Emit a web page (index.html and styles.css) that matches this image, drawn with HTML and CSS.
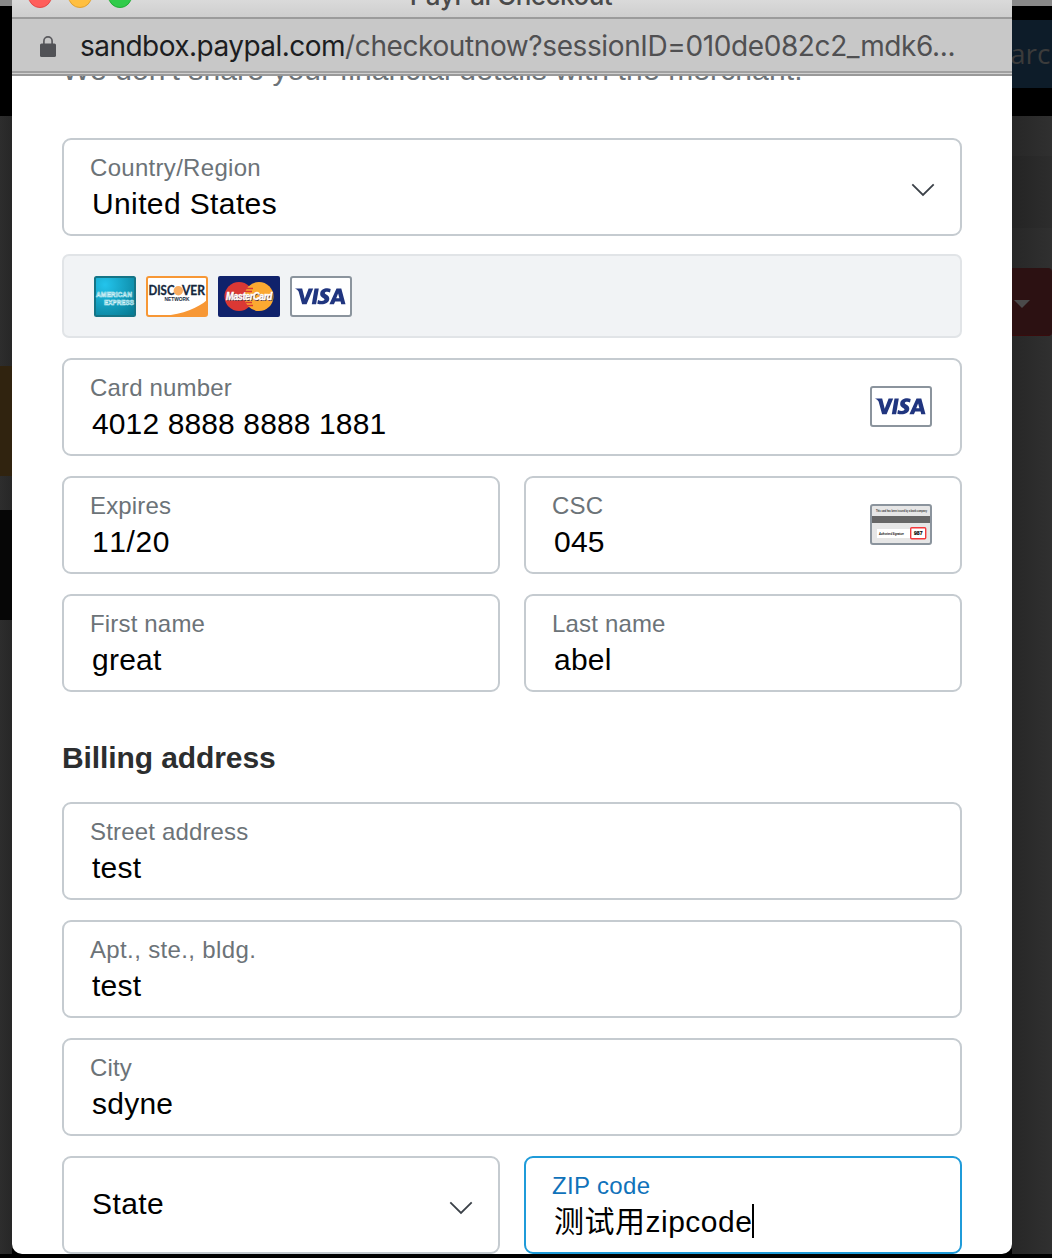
FILE: index.html
```html
<!DOCTYPE html>
<html lang="en">
<head>
<meta charset="utf-8">
<title>PayPal Checkout</title>
<link rel="stylesheet" href="styles.css">
</head>
<body>
<svg class="defs" width="0" height="0" aria-hidden="true">
  <symbol id="chevron" viewBox="0 0 24 14"><path d="M1.3 1.3 12 12 22.7 1.3" fill="none" stroke="#3b4148" stroke-width="1.8"/></symbol>
  <symbol id="visa" viewBox="0 0 62 41">
    <rect x="1" y="1" width="60" height="39" rx="2" fill="#fff" stroke="#8b949d" stroke-width="2"/>
    <path d="M5 12.5h7.2l2.5 10.3L18.6 12.5h4.6l-6.6 15.8h-4.5L8.6 15.4Q7.5 13.5 5 12.5z" fill="#20357f"/>
    <path d="M24.5 12.5h4.3l-2.7 15.8h-4.3z" fill="#20357f"/>
    <path d="M40.7 12.9 40 16.4c-2-.9-5-.9-5.2.6-.2 1.7 4.900 1.900 4.500 6-.5 5-6.900 6.200-12 4.700l.7-3.700c2.600 1.300 6.200 1.300 6.500-.4.200-1.700-4.800-2-4.300-6.200.6-4.700 6.200-5.900 10.500-4.500z" fill="#20357f"/>
    <path fill-rule="evenodd" d="M46.500 12.500h4.800l4.200 15.800h-4.300l-.6-2.700h-5.400l-1.300 2.700h-4.500zm1.600 5-1.900 4.800h3.200z" fill="#20357f"/>
  </symbol>
</svg>
<div class="screen">
  <div class="backdrop left">
    <div class="strip browser"></div><div class="strip nav"></div><div class="strip gap"></div>
    <div class="strip gold"></div><div class="strip small-gap"></div><div class="strip dark"></div>
  </div>
  <div class="window">
    <header class="titlebar">
      <div class="lights"><i class="red"></i><i class="yellow"></i><i class="green"></i></div>
      <div class="title">PayPal Checkout</div>
    </header>
    <div class="address">
      <svg class="lock" width="16" height="21" viewBox="0 0 16 21"><path d="M3.900 9V5a4.100 4.100 0 0 1 8.200 0v4" fill="none" stroke="#5a5a5e" stroke-width="1.700"/><rect y="7.500" width="16" height="13.500" rx="1.600" fill="#515256"/></svg>
      <div class="url"><span>sandbox.paypal.com</span>/checkoutnow?sessionID=010de082c2_mdk6...</div>
    </div>
    <main class="page">
      <div class="notice"><p>We don't share your financial details with the merchant.</p></div>
      <form class="form">
        <div class="field country"><div><label>Country/Region</label><div class="value">United States</div></div><svg class="chevron"><use href="#chevron"/></svg></div>
        <div class="cards">
          <svg width="42" height="41" viewBox="0 0 42 41">
            <defs><radialGradient id="amex" cx=".25" cy=".2" r="1"><stop stop-color="#23c4ec"/><stop offset="1" stop-color="#087d96"/></radialGradient></defs>
            <rect x="1" y="1" width="40" height="39" rx="1.500" fill="url(#amex)" stroke="#157486" stroke-width="2"/>
            <g class="amex-text"><text x="2" y="21" textLength="36" lengthAdjust="spacingAndGlyphs">AMERICAN</text><text x="10" y="28.500" textLength="30" lengthAdjust="spacingAndGlyphs">EXPRESS</text></g>
          </svg>
          <svg width="62" height="41" viewBox="0 0 62 41">
            <rect x="1" y="1" width="60" height="39" rx="2" fill="#fff"/><path d="M61 24v16H18C37 38 52 32 61 24z" fill="#f79735"/>
            <rect x="1" y="1" width="60" height="39" rx="2" fill="none" stroke="#f79735" stroke-width="2"/>
            <text class="discover" x="2.500" y="19.300" textLength="26" lengthAdjust="spacingAndGlyphs">DISC</text><circle cx="32.300" cy="14.800" r="4.700" fill="#f9ad62"/><text class="discover" x="36" y="19.300" textLength="23" lengthAdjust="spacingAndGlyphs">VER</text>
            <text class="network" x="18.500" y="25" textLength="25" lengthAdjust="spacingAndGlyphs">NETWORK</text>
          </svg>
          <svg width="62" height="41" viewBox="0 0 62 41">
            <rect width="62" height="41" rx="2" fill="#10226b"/><circle cx="21" cy="20.500" r="14.500" fill="#da3834"/><circle cx="41" cy="20.500" r="14.500" fill="#fba931"/>
            <path d="M28.500 12.500H35M27 15.500h7M28 26.500h6M29 29.500h6" stroke="#da3834" stroke-width="1.500"/>
            <text class="mc shadow" x="8.700" y="25" textLength="46" lengthAdjust="spacingAndGlyphs">MasterCard</text><text class="mc" x="8" y="24.300" textLength="46" lengthAdjust="spacingAndGlyphs">MasterCard</text>
          </svg>
          <svg width="62" height="41"><use href="#visa"/></svg>
        </div>
        <div class="field number"><div><label>Card number</label><div class="value">4012 8888 8888 1881</div></div><svg width="62" height="41"><use href="#visa"/></svg></div>
        <div class="row">
          <div class="field expires"><div><label>Expires</label><div class="value">11/20</div></div></div>
          <div class="field"><div><label>CSC</label><div class="value">045</div></div>
            <svg width="62" height="41" viewBox="0 0 62 41"><rect x="1" y="1" width="60" height="39" rx="2" fill="#e6e6e6" stroke="#8b949d" stroke-width="2"/><rect x="2" y="12" width="58" height="7" fill="#666"/><text class="micro" x="6" y="7.500" textLength="51" lengthAdjust="spacingAndGlyphs">This card has been issued by a bank company</text><rect x="7" y="25" width="33" height="9" fill="#fff"/><text class="signature" x="9" y="31" textLength="25" lengthAdjust="spacingAndGlyphs">Authorized Signature</text><rect x="40.700" y="23.700" width="15" height="11" rx="1" fill="#fff" stroke="#f3373b" stroke-width="1.400"/><text class="code" x="44" y="31.200" textLength="8.500" lengthAdjust="spacingAndGlyphs">987</text></svg>
          </div>
        </div>
        <div class="row">
          <div class="field"><div><label>First name</label><div class="value">great</div></div></div>
          <div class="field"><div><label>Last name</label><div class="value">abel</div></div></div>
        </div>
        <h2>Billing address</h2>
        <div class="field"><div><label>Street address</label><div class="value">test</div></div></div>
        <div class="field apartment"><div><label>Apt., ste., bldg.</label><div class="value">test</div></div></div>
        <div class="field"><div><label>City</label><div class="value">sdyne</div></div></div>
        <div class="row">
          <div class="field state"><div class="value">State</div><svg class="chevron"><use href="#chevron"/></svg></div>
          <div class="field focused"><div><label>ZIP code</label><div class="value">测试用zipcode<i class="caret"></i></div></div></div>
        </div>
      </form>
    </main>
  </div>
  <div class="backdrop right">
    <div class="strip browser"></div><div class="strip nav-top"></div><div class="strip search">arch</div><div class="strip nav-bottom"></div>
    <div class="strip light"></div><div class="strip mid"></div><div class="strip light"></div><div class="strip red-button"><svg width="16" height="8"><path d="M0 0h16L8 8z" fill="#4a4a4a"/></svg></div>
  </div>
</div>
</body>
</html>
```

FILE: styles.css
```css
* { box-sizing: border-box; }
body { margin: 0; background: #000; font-family: "Liberation Sans", "Noto Sans CJK SC", sans-serif; height: 1258px; overflow: hidden; }
.defs { position: absolute; }
.screen { display: grid; grid-template-columns: 12px 1000px 40px; height: 1254px; }
.backdrop { background: #2b2b2b; overflow: hidden; }
.left { background: linear-gradient(90deg, #2d2d2d, #272727); }
.right { background: linear-gradient(90deg, #272727, #303030); }
.strip.browser { height: 6px; background: #898989; }
.strip.nav { height: 110px; background: #000; }
.strip.gap { height: 250px; }
.strip.gold { height: 110px; background: #30230f; }
.strip.small-gap { height: 34px; }
.strip.dark { height: 110px; background: #060606; }
.strip.nav-top { height: 14px; background: #000; }
.strip.search { height: 68px; background: #0d1c29; color: #3b3b3b; font: 28px/67px "Open Sans", sans-serif; text-indent: -2px; white-space: nowrap; }
.strip.nav-bottom { height: 28px; background: #000; }
.strip.light { height: 40px; }
.strip.mid { height: 72px; background: #00000010; }
.strip.red-button { height: 68px; background: #2c1112; border-bottom: 1px solid #3a0b0c; border-radius: 0 4px 4px 0; padding: 32px 2px; display: flex; }
.window { height: 1254px; background: #fff; border-radius: 0 0 10px 10px; overflow: hidden; }
.titlebar { height: 19px; background: linear-gradient(#dadada, #cecece); border-bottom: 2px solid #9b9b9b; display: grid; grid-template-columns: 120px 1fr 120px; grid-template-rows: 17px; align-items: end; overflow: hidden; }
.lights { display: flex; gap: 16px; padding: 0 0 9px 16px; }
.lights i { flex: none; width: 24px; height: 24px; border-radius: 50%; border: 1px solid; }
.lights .red { background: #ff5e5b; border-color: #e24a48; }
.lights .yellow { background: #ffbf40; border-color: #dfa133; }
.lights .green { background: #30cb4a; border-color: #22ad36; }
.title { font: 500 26px/32px Inter, sans-serif; color: #4a4a4a; text-align: center; padding: 0 2px 5px 0; letter-spacing: -.5px; }
.address { height: 57px; background: #c8c8c8; border-bottom: 2px solid #999; box-shadow: inset 0 -1px #d0d0d0, inset 0 -3px #a0a0a0; display: flex; padding: 0 0 0 28px; }
.lock { margin: 17px 24px 0 0; flex: none; }
.url { font: 28px/55px Inter, sans-serif; color: #505052; white-space: nowrap; letter-spacing: -.39px; }
.url span { color: #1c1d21; letter-spacing: -.53px; }
.page { padding: 0 50px; }
.notice { height: 62px; overflow: hidden; display: flex; align-items: flex-start; }
.notice p { margin: -23px 0 0; font-size: 30px; line-height: 34px; color: #6c7378; white-space: nowrap; letter-spacing: .12px; }
.form { display: flex; flex-direction: column; gap: 20px; }
.field { height: 98px; border: 2px solid #c5cbd0; border-radius: 9px; padding: 13px 28px 0 26px; display: flex; justify-content: space-between; background: #fff; }
.field svg { flex: none; margin-top: 13px; }
.field label { display: block; font-size: 24px; line-height: 30px; color: #6c7378; letter-spacing: .17px; }
.value { font-size: 30px; line-height: 36px; padding: 3px 0 0 2px; letter-spacing: .25px; color: #000; white-space: nowrap; font-kerning: none; }
.number .value { letter-spacing: .12px; }
.expires .value { letter-spacing: .6px; }
.apartment label { letter-spacing: .36px; }
.chevron { width: 24px; height: 14px; }
.country { margin-bottom: -2px; padding-right: 25px; }
.country label { letter-spacing: .3px; }
.country .value { letter-spacing: .38px; }
.field.country .chevron { margin-top: 30px; }
.cards { height: 84px; border: 2px solid #e1e4e7; border-radius: 7px; background: #f1f3f5; display: flex; gap: 10px; padding: 20px 30px; }
.row { display: grid; grid-template-columns: 438px 438px; gap: 24px; }
.amex-text { font: bold 7.5px "Liberation Sans", sans-serif; fill: #22a5c2; stroke: #d8f3f8; stroke-width: .6px; }
.discover { font: bold 12.5px Lato, sans-serif; fill: #16283d; stroke: #16283d; stroke-width: .3px; }
.network { font: bold 5px "Liberation Sans", sans-serif; fill: #16283d; }
.mc { font: italic bold 10px "Liberation Sans", sans-serif; fill: #fff; stroke: #fff; stroke-width: .4px; letter-spacing: -.5px; }
.mc.shadow { fill: #4b2b38; stroke: none; }
.micro { font: bold 3px "Liberation Sans", sans-serif; fill: #333; }
.signature { font: italic bold 4px "Liberation Sans", sans-serif; fill: #000; }
.code { font: bold 6px "Liberation Sans", sans-serif; fill: #000; stroke: #000; stroke-width: .2px; }
h2 { margin: 29px 0 7px; height: 34px; font-size: 30px; line-height: 34px; font-weight: bold; color: #2c2e2f; letter-spacing: -.1px; }
.state { padding-right: 25px; }
.state .value { padding-top: 15px; letter-spacing: .4px; }
.field.state .chevron { margin-top: 30px; }
.focused { border-color: #1f9bd9; }
.focused .value { letter-spacing: .5px; }
.focused label { color: #1072ba; letter-spacing: .35px; }
.caret { display: inline-block; width: 2px; height: 34px; background: #000; vertical-align: 4px; margin: -10px 0; }
```
